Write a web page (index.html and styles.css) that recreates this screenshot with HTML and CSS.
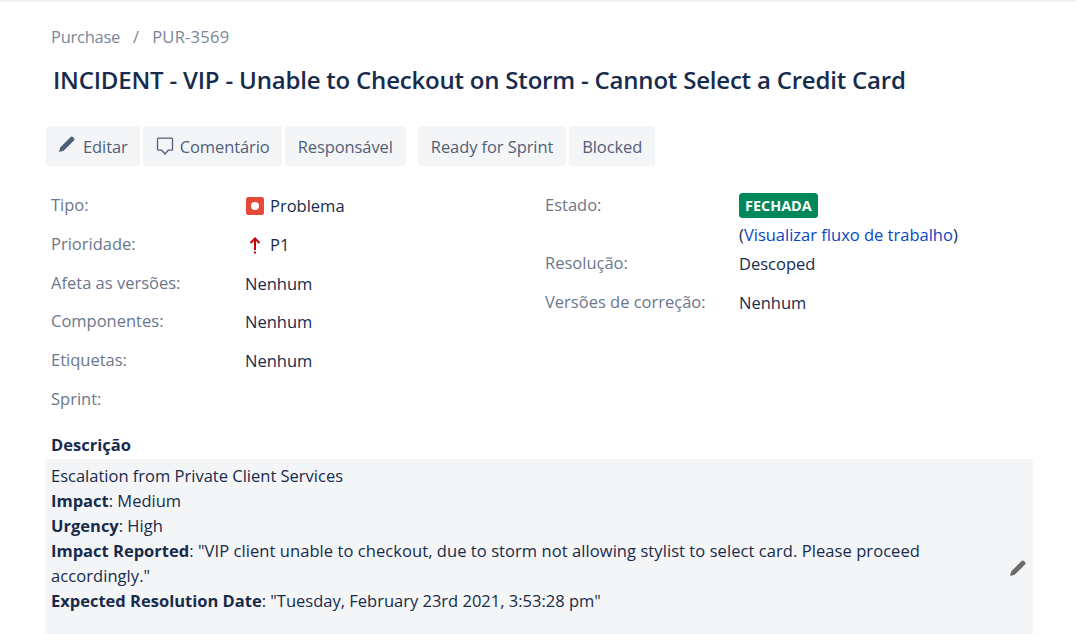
FILE: index.html
```html
<!DOCTYPE html>
<html lang="pt">
<head>
<meta charset="utf-8">
<title>PUR-3569</title>
<link rel="stylesheet" href="styles.css">
</head>
<body>
<div class="topline"></div>
<main class="issue">
  <nav class="crumbs"><span class="crumb-project">Purchase</span><span class="sep">/</span><span class="crumb-key">PUR-3569</span></nav>
  <h1 class="title">INCIDENT - VIP - Unable to Checkout on Storm - Cannot Select a Credit Card</h1>
  <div class="toolbar">
    <div class="group">
      <a class="btn btn-icon"><svg class="ico-edit" viewBox="0 0 18 18" width="18" height="18"><path d="M1 17l1.200-4.600L12.600 2a1.600 1.600 0 0 1 2.300 0l1.100 1.100a1.600 1.600 0 0 1 0 2.300L5.600 15.800z" fill="#505f79"/></svg>Editar</a>
      <a class="btn btn-icon"><svg class="ico-comment" viewBox="0 0 18 18" width="18" height="18"><path d="M2.500 1.200h13a1 1 0 0 1 1 1v10a1 1 0 0 1-1 1h-3.200L9 17l-3.300-3.800H2.500a1 1 0 0 1-1-1v-10a1 1 0 0 1 1-1z" fill="none" stroke="#505f79" stroke-width="1.300"/></svg>Comentário</a>
      <a class="btn">Responsável</a>
    </div>
    <div class="group">
      <a class="btn">Ready for Sprint</a>
      <a class="btn">Blocked</a>
    </div>
  </div>
  <section class="details">
    <dl class="col col-left">
      <div class="row"><dt>Tipo:</dt><dd class="with-icon"><svg class="type-icon" viewBox="0 0 18 18" width="18" height="18"><rect width="18" height="18" rx="2.500" fill="#e5493a"/><circle cx="9" cy="9" r="4" fill="#fff"/></svg>Problema</dd></div>
      <div class="row"><dt>Prioridade:</dt><dd class="with-icon"><svg class="type-icon" viewBox="0 0 18 18" width="18" height="18"><path d="M9 14V2.500M4.500 7L9 2.500 13.500 7" fill="none" stroke="#c9000b" stroke-width="2"/><rect x="8" y="15.500" width="2" height="2" fill="#c9000b"/></svg>P1</dd></div>
      <div class="row"><dt>Afeta as versões:</dt><dd>Nenhum</dd></div>
      <div class="row"><dt>Componentes:</dt><dd>Nenhum</dd></div>
      <div class="row"><dt>Etiquetas:</dt><dd>Nenhum</dd></div>
      <div class="row"><dt>Sprint:</dt><dd></dd></div>
    </dl>
    <dl class="col col-right">
      <div class="row"><dt>Estado:</dt><dd><span class="lozenge">FECHADA</span><div class="flow">(<a>Visualizar fluxo de trabalho</a>)</div></dd></div>
      <div class="row"><dt>Resolução:</dt><dd>Descoped</dd></div>
      <div class="row"><dt>Versões de correção:</dt><dd>Nenhum</dd></div>
    </dl>
  </section>
  <h2 class="desc-title">Descrição</h2>
  <section class="desc">
    <p>Escalation from Private Client Services</p>
    <p><b>Impact</b>: Medium</p>
    <p><b>Urgency</b>: High</p>
    <p><b>Impact Reported</b><span class="reported">: "VIP client unable to checkout, due to storm not allowing stylist to select card. Please proceed accordingly."</span></p>
    <p><b>Expected Resolution Date</b>: "Tuesday, February 23rd 2021, 3:53:28 pm"</p>
    <p class="next"><b>Resolved</b></p>
    <svg class="desc-edit" viewBox="0 0 18 18" width="18" height="18"><path d="M1 17l1.200-4.600L12.600 2a1.600 1.600 0 0 1 2.300 0l1.100 1.100a1.600 1.600 0 0 1 0 2.300L5.600 15.800z" fill="#6b6b6b"/></svg>
  </section>
</main>
</body>
</html>
```
FILE: styles.css
```css
* { box-sizing: border-box; }
html, body { margin: 0; height: 634px; overflow: hidden; background: #fff; }
body { font-family: "Open Sans", "Noto Sans", sans-serif; font-size: 16.5px; color: #172b4d; }
.topline { height: 2px; background: #f2f2f2; }
.issue { padding: 0 43px 0 45px; }
.crumbs { margin: 24px 0 0 6px; height: 22px; line-height: 22px; color: #7a869a; display: flex; gap: 13px; }
.crumb-project { letter-spacing: -0.25px; }
.crumb-key { letter-spacing: 0.25px; }
.title { margin: 15px 0 0 8px; height: 34px; line-height: 34px; font-size: 24px; font-weight: 600; letter-spacing: -0.2px; }
.toolbar { margin: 29px 0 0 1px; display: flex; gap: 12px; }
.group { display: flex; gap: 3px; }
.btn { height: 40px; padding: 0 13px; display: flex; align-items: center; background: #f4f5f7; border-radius: 3.500px; color: #505f79; letter-spacing: -0.09px; }
.btn-icon { padding-right: 12px; }
.ico-edit { margin: -5px 7px 0 -1px; }
.ico-comment { margin-right: 6px; }
.details { display: flex; margin: 20px 0 0 6px; }
.col { margin: 0; }
.col-left { width: 494px; }
.row { display: flex; min-height: 38.800px; line-height: 37.800px; }
dt { width: 194px; color: #6b778c; line-height: 37px; }
dd { margin: 0; padding-top: 1px; }
.with-icon { display: flex; align-items: center; }
.type-icon { margin: 0 6px 0 1px; }
.lozenge { display: inline-block; height: 25px; line-height: 25px; padding: 0 6px; background: #00875a; color: #fff; font-size: 14.400px; font-weight: 700; border-radius: 3.500px; vertical-align: top; margin-top: 6px; }
.col-right .row:first-child { line-height: 25px; min-height: 58px; }
.flow { margin-top: 4px; height: 22px; line-height: 26px; color: #172b4d; }
.flow a { color: #0747c6; }
.desc-title { margin: 13px 0 0 6px; height: 26px; line-height: 26px; font-size: 16.500px; font-weight: 700; }
.desc { position: relative; background: #f4f5f7; padding: 4px 100px 0 6px; margin-top: 1px; height: 200px; border-radius: 3px 3px 0 0; line-height: 25px; }
.desc p { margin: 0; }
.reported { letter-spacing: 0.07px; }
.next { margin-top: 15px !important; }
.desc-edit { position: absolute; right: 6px; top: 100px; }
```
